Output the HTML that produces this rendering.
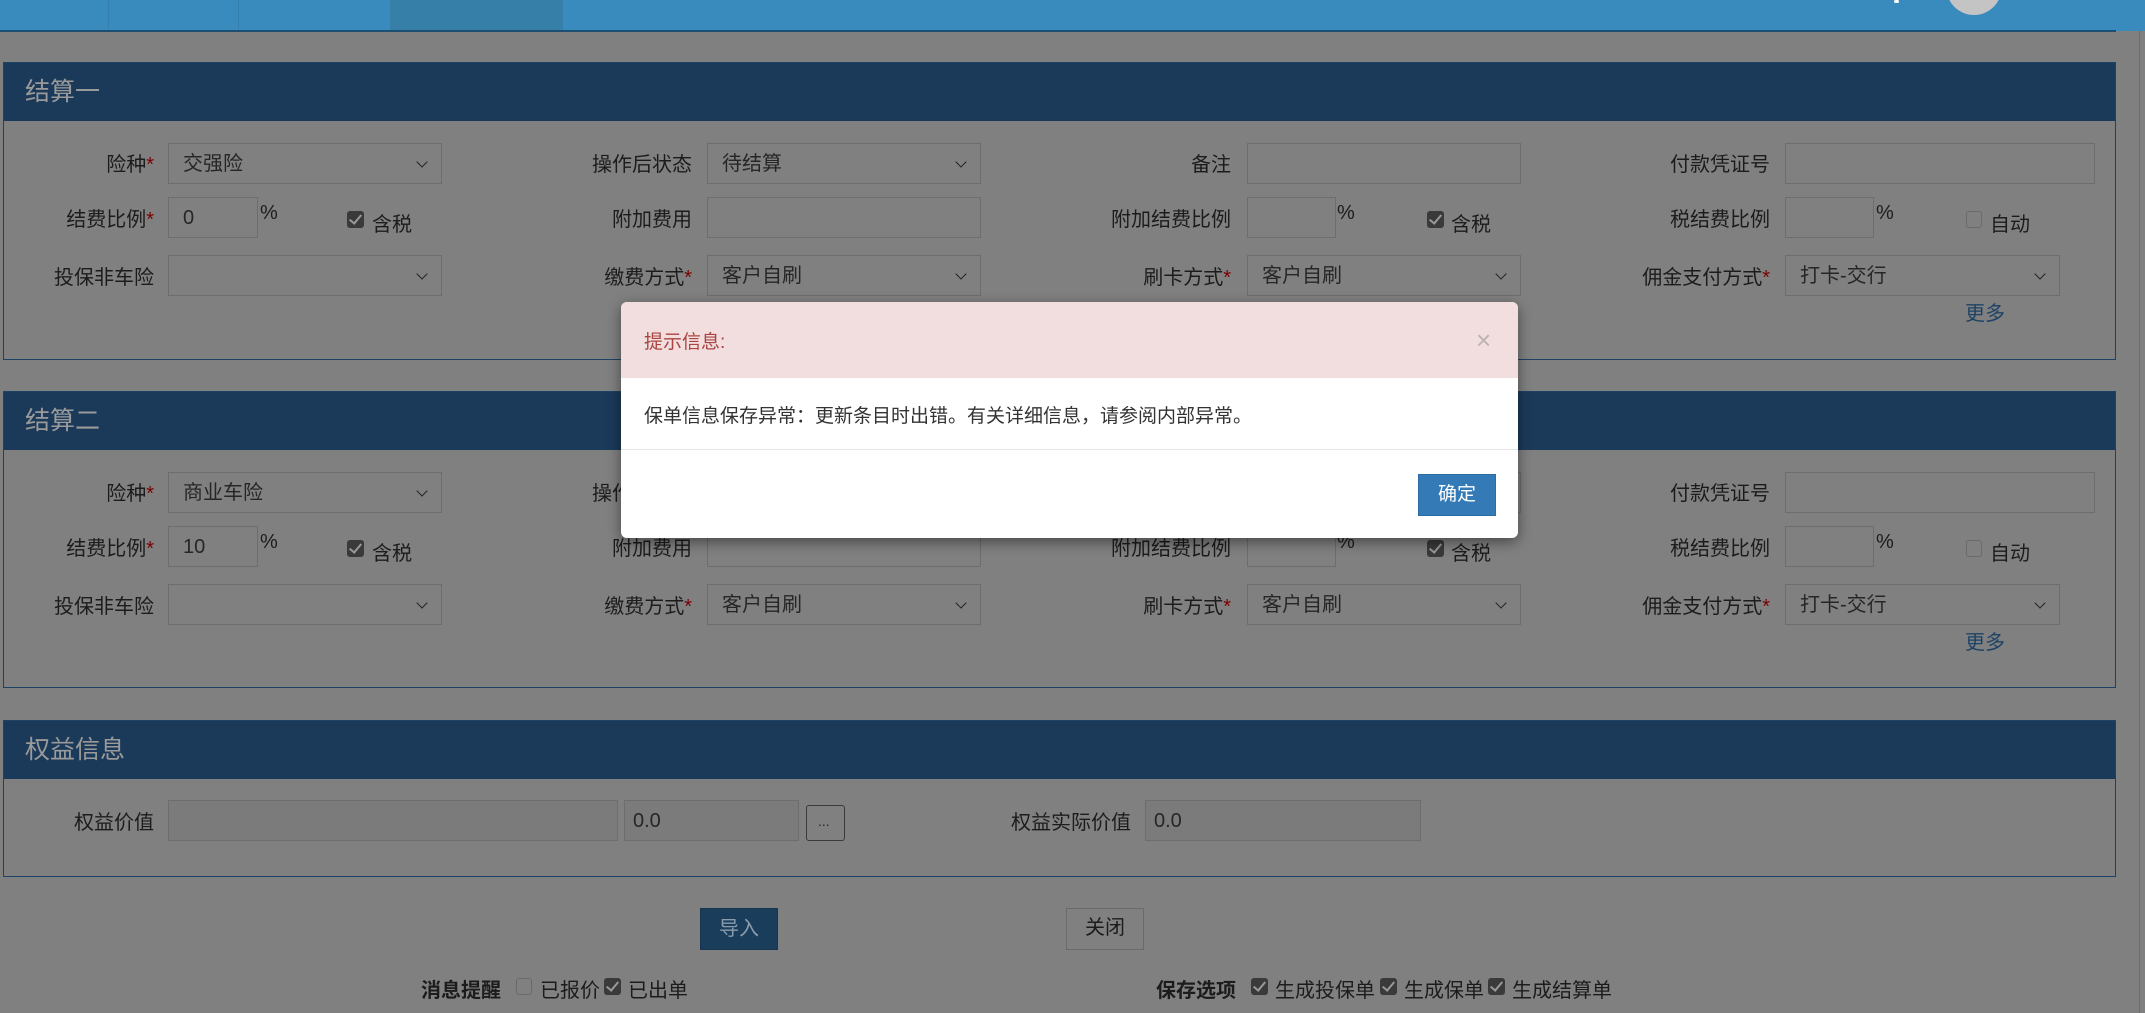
<!DOCTYPE html>
<html><head><meta charset="utf-8">
<style>
*{box-sizing:border-box;margin:0;padding:0}
body{width:2145px;height:1013px;overflow:hidden;background:#808080;position:relative;font-family:"Liberation Sans","Noto Sans CJK SC",sans-serif;color:#1e1e1e}
.a{position:absolute}
.top{left:0;top:0;width:2145px;height:31px;background:#3a8bbd}
.topline{left:0;top:30px;width:2116px;height:2px;background:#1d4f73}
.sep{top:0;width:1px;height:31px;background:#347fae}
.panel{left:3px;width:2113px;border:1px solid #1d4266}
.ph{position:absolute;left:0;top:0;right:0;height:58px;background:#1b3a5a;color:#9a9a9a;font-size:25px;line-height:58px;padding-left:21px}
.lb{position:absolute;text-align:right;font-size:20px;line-height:41px;white-space:nowrap;color:#1c1c1c}
.st{color:#7a0000}
.in{position:absolute;height:41px;border:1.5px solid #6d6d6d;font-size:20px;line-height:40px;padding-left:14px;color:#262626}
.sel::after{content:"";position:absolute;right:15px;top:14px;width:7px;height:7px;border-right:1.5px solid #222;border-bottom:1.5px solid #222;transform:rotate(45deg)}
.pct{position:absolute;font-size:20px;color:#1c1c1c}
.cb{position:absolute;width:17px;height:17px;border-radius:3px;background:#3a3a3a}
.cb::after{content:"";position:absolute;left:5px;top:1px;width:5px;height:10px;border-right:2px solid #999;border-bottom:2px solid #999;transform:rotate(40deg)}
.cbe{position:absolute;width:16px;height:17px;border-radius:3px;border:1.5px solid #6a6a6a}
.ct{position:absolute;font-size:20px;color:#1c1c1c}
.more{position:absolute;font-size:20px;color:#1d4266}
.dis{background:#7b7b7b}
</style></head><body>
<div class="a top"></div>
<div class="a sep" style="left:108px"></div>
<div class="a sep" style="left:238px"></div>
<div class="a" style="left:390px;top:0;width:173px;height:31px;background:#357fa8"></div>
<div class="a" style="left:1946px;top:-42px;width:56px;height:57px;border-radius:50%;background:#c4c4c4"></div>
<div class="a" style="left:1894px;top:0;width:5px;height:3px;border-radius:2px;background:#fff"></div>
<div class="a topline"></div>
<div class="a" style="left:2139px;top:31px;width:1px;height:982px;background:#6c6c6c"></div>

<div class="a panel" style="top:62px;height:298px"><div class="ph">结算一</div></div>
<div class="a panel" style="top:391px;height:297px"><div class="ph">结算二</div></div>
<div class="a panel" style="top:720px;height:157px"><div class="ph">权益信息</div></div>

<div class="lb" style="left:0;width:154px;top:145px">险种<span class="st">*</span></div>
<div class="in sel" style="left:168px;top:143px;width:274px">交强险</div>
<div class="lb" style="left:500px;width:192px;top:145px">操作后状态</div>
<div class="in sel" style="left:707px;top:143px;width:274px">待结算</div>
<div class="lb" style="left:1000px;width:231px;top:145px">备注</div>
<div class="in" style="left:1247px;top:143px;width:274px"></div>
<div class="lb" style="left:1500px;width:270px;top:145px">付款凭证号</div>
<div class="in" style="left:1785px;top:143px;width:310px"></div>

<div class="lb" style="left:0;width:154px;top:200px">结费比例<span class="st">*</span></div>
<div class="in" style="left:168px;top:197px;width:90px">0</div>
<div class="pct" style="left:260px;top:202px">%</div>
<div class="cb" style="left:347px;top:211px"></div><div class="ct" style="left:372px;top:208px">含税</div>
<div class="lb" style="left:500px;width:192px;top:200px">附加费用</div>
<div class="in" style="left:707px;top:197px;width:274px"></div>
<div class="lb" style="left:1000px;width:231px;top:200px">附加结费比例</div>
<div class="in" style="left:1247px;top:197px;width:89px"></div>
<div class="pct" style="left:1337px;top:202px">%</div>
<div class="cb" style="left:1427px;top:211px"></div><div class="ct" style="left:1451px;top:208px">含税</div>
<div class="lb" style="left:1500px;width:270px;top:200px">税结费比例</div>
<div class="in" style="left:1785px;top:197px;width:89px"></div>
<div class="pct" style="left:1876px;top:202px">%</div>
<div class="cbe" style="left:1966px;top:211px"></div><div class="ct" style="left:1990px;top:208px">自动</div>

<div class="lb" style="left:0;width:154px;top:258px">投保非车险</div>
<div class="in sel" style="left:168px;top:255px;width:274px"></div>
<div class="lb" style="left:500px;width:192px;top:258px">缴费方式<span class="st">*</span></div>
<div class="in sel" style="left:707px;top:255px;width:274px">客户自刷</div>
<div class="lb" style="left:1000px;width:231px;top:258px">刷卡方式<span class="st">*</span></div>
<div class="in sel" style="left:1247px;top:255px;width:274px">客户自刷</div>
<div class="lb" style="left:1500px;width:270px;top:258px">佣金支付方式<span class="st">*</span></div>
<div class="in sel" style="left:1785px;top:255px;width:275px">打卡-交行</div>
<div class="more" style="left:1965px;top:297px">更多</div>

<div class="lb" style="left:0;width:154px;top:474px">险种<span class="st">*</span></div>
<div class="in sel" style="left:168px;top:472px;width:274px">商业车险</div>
<div class="lb" style="left:500px;width:192px;top:474px">操作后状态</div>
<div class="in sel" style="left:707px;top:472px;width:274px">待结算</div>
<div class="lb" style="left:1000px;width:231px;top:474px">备注</div>
<div class="in" style="left:1247px;top:472px;width:274px"></div>
<div class="lb" style="left:1500px;width:270px;top:474px">付款凭证号</div>
<div class="in" style="left:1785px;top:472px;width:310px"></div>

<div class="lb" style="left:0;width:154px;top:529px">结费比例<span class="st">*</span></div>
<div class="in" style="left:168px;top:526px;width:90px">10</div>
<div class="pct" style="left:260px;top:531px">%</div>
<div class="cb" style="left:347px;top:540px"></div><div class="ct" style="left:372px;top:537px">含税</div>
<div class="lb" style="left:500px;width:192px;top:529px">附加费用</div>
<div class="in" style="left:707px;top:526px;width:274px"></div>
<div class="lb" style="left:1000px;width:231px;top:529px">附加结费比例</div>
<div class="in" style="left:1247px;top:526px;width:89px"></div>
<div class="pct" style="left:1337px;top:531px">%</div>
<div class="cb" style="left:1427px;top:540px"></div><div class="ct" style="left:1451px;top:537px">含税</div>
<div class="lb" style="left:1500px;width:270px;top:529px">税结费比例</div>
<div class="in" style="left:1785px;top:526px;width:89px"></div>
<div class="pct" style="left:1876px;top:531px">%</div>
<div class="cbe" style="left:1966px;top:540px"></div><div class="ct" style="left:1990px;top:537px">自动</div>

<div class="lb" style="left:0;width:154px;top:587px">投保非车险</div>
<div class="in sel" style="left:168px;top:584px;width:274px"></div>
<div class="lb" style="left:500px;width:192px;top:587px">缴费方式<span class="st">*</span></div>
<div class="in sel" style="left:707px;top:584px;width:274px">客户自刷</div>
<div class="lb" style="left:1000px;width:231px;top:587px">刷卡方式<span class="st">*</span></div>
<div class="in sel" style="left:1247px;top:584px;width:274px">客户自刷</div>
<div class="lb" style="left:1500px;width:270px;top:587px">佣金支付方式<span class="st">*</span></div>
<div class="in sel" style="left:1785px;top:584px;width:275px">打卡-交行</div>
<div class="more" style="left:1965px;top:626px">更多</div>

<div class="lb" style="left:0;width:154px;top:803px">权益价值</div>
<div class="in dis" style="left:168px;top:800px;width:450px"></div>
<div class="in dis" style="left:624px;top:800px;width:175px;padding-left:8px">0.0</div>
<div class="in" style="left:806px;top:805px;width:39px;height:36px;border-radius:3px;border-color:#3a3a3a;line-height:30px;padding-left:11px;font-size:14px">...</div>
<div class="lb" style="left:900px;width:231px;top:803px">权益实际价值</div>
<div class="in dis" style="left:1145px;top:800px;width:276px;padding-left:8px">0.0</div>

<div class="a" style="left:700px;top:908px;width:78px;height:42px;background:#1a3d5c;border:1px solid #17354f;color:#8a9bab;font-size:20px;line-height:40px;text-align:center">导入</div>
<div class="a" style="left:1066px;top:908px;width:78px;height:42px;border:1.5px solid #6a6a6a;font-size:20px;line-height:39px;text-align:center;color:#1c1c1c">关闭</div>

<div class="ct" style="left:421px;top:974px;font-weight:bold">消息提醒</div>
<div class="cbe" style="left:516px;top:978px"></div><div class="ct" style="left:540px;top:974px">已报价</div>
<div class="cb" style="left:604px;top:978px"></div><div class="ct" style="left:628px;top:974px">已出单</div>
<div class="ct" style="left:1156px;top:974px;font-weight:bold">保存选项</div>
<div class="cb" style="left:1251px;top:978px"></div><div class="ct" style="left:1275px;top:974px">生成投保单</div>
<div class="cb" style="left:1380px;top:978px"></div><div class="ct" style="left:1404px;top:974px">生成保单</div>
<div class="cb" style="left:1488px;top:978px"></div><div class="ct" style="left:1512px;top:974px">生成结算单</div>

<div class="a" style="left:621px;top:302px;width:897px;height:236px;background:#fff;border-radius:6px;box-shadow:0 4px 14px rgba(0,0,0,.45);overflow:hidden">
  <div class="a" style="left:0;top:0;width:897px;height:76px;background:#f2dede"></div>
  <div class="a" style="left:23px;top:25px;font-size:19px;color:#a94442">提示信息:</div>
  <div class="a" style="left:855px;top:23px;font-size:26px;color:#bdb3b3;line-height:30px">×</div>
  <div class="a" style="left:23px;top:99px;font-size:19px;color:#333">保单信息保存异常：更新条目时出错。有关详细信息，请参阅内部异常。</div>
  <div class="a" style="left:0;top:147px;width:897px;height:1px;background:#e5e5e5"></div>
  <div class="a" style="left:797px;top:172px;width:78px;height:42px;background:#337ab7;border:1px solid #2e6da4;color:#fff;font-size:19px;line-height:40px;text-align:center">确定</div>
</div>
</body></html>
